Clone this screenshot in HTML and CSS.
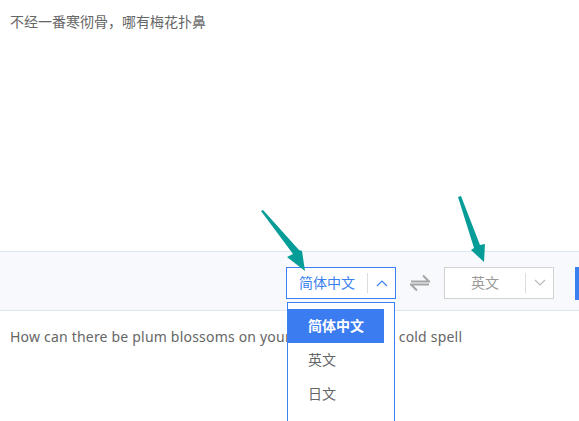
FILE: index.html
```html
<!DOCTYPE html>
<html lang="zh-CN">
<head>
    <meta charset="UTF-8">
    <title>翻译</title>
    <link rel="stylesheet" href="styles.css">
</head>
<body>

    <div class="page">
        <!-- source text -->
        <div class="source">不经一番寒彻骨，哪有梅花扑鼻</div>

        <div class="toolbar">
            <div class="select active">
                <span class="select-label">简体中文</span>
                <span class="select-arrow">
                    <svg width="12" height="8" viewBox="0 0 12 8"><path d="M1 7 L6 2 L11 7" fill="none" stroke="#3a80f0" stroke-width="1.2"/></svg>
                </span>
                <ul class="dropdown">
                    <li class="selected">简体中文</li>
                    <li>英文</li>
                    <li>日文</li>
                </ul>
            </div>

            <span class="swap">
                <svg width="20" height="18" viewBox="0 0 20 18"><path d="M1 7.5 H19 L13 1.5 M19 10.5 H1 L7 16.5" fill="none" stroke="#a5a5a5" stroke-width="2"/></svg>
            </span>

            <div class="select">
                <span class="select-label">英文</span>
                <span class="select-arrow">
                    <svg width="12" height="8" viewBox="0 0 12 8"><path d="M1 1 L6 6 L11 1" fill="none" stroke="#b8b8b8" stroke-width="1.2"/></svg>
                </span>
            </div>

            <button class="translate-btn" title="翻译"></button>
        </div>

        <!-- result -->
        <div class="result">How can there be plum blossoms on your nose without a cold spell</div>
    </div>

    <!-- annotation arrows -->
    <svg class="marks" width="579" height="421" viewBox="0 0 579 421">
        <polygon points="261,211 263,210 299,250 302,251 305,271 287,257 293,254" fill="#069c98"/>
        <polygon points="458,197 461,196 480,245 485,244 484,262 471,250 474,248" fill="#069c98"/>
    </svg>

</body>
</html>
```

FILE: styles.css
```css
:root {
    --blue: #3a80f0;
    --text: #666;
    --grey-border: #d2d2d2;
}

body {
    margin: 0;
    width: 579px;
    height: 421px;
    overflow: hidden;
    position: relative;
    font-family: "Noto Sans", "Noto Sans CJK SC", sans-serif;
    font-size: 14px;
    color: var(--text);
    background: #fff;
}

.page {
    display: flex;
    flex-direction: column;
}

.source {
    height: 239px;
    padding: 12px 10px 0;
    line-height: 20px;
}

.toolbar {
    height: 43px;
    border-top: 1px solid #dde7f4;
    border-bottom: 1px solid #dde7f4;
    background: #f7f9fc;
    display: flex;
    align-items: flex-start;
    padding: 15px 0 0 286px;
    overflow: visible;
}

.toolbar > * {
    flex-shrink: 0;
}

.select {
    position: relative;
    width: 110px;
    height: 32px;
    box-sizing: border-box;
    border: 1px solid var(--grey-border);
    background: #fff;
    display: flex;
    align-items: center;
    color: #9a9a9a;
}

.select.active {
    border-color: var(--blue);
    color: var(--blue);
}

.select-label {
    flex: 1;
    text-align: center;
    line-height: 20px;
    border-right: 1px solid #ddd;
}

.select-arrow {
    width: 27px;
    display: flex;
    justify-content: center;
    align-items: center;
}

.swap {
    width: 48px;
    display: flex;
    justify-content: center;
    padding-top: 7px;
}

.translate-btn {
    margin-left: 21px;
    width: 4px;
    height: 33px;
    padding: 0;
    border: none;
    background: var(--blue);
}

.dropdown {
    position: absolute;
    top: 34px;
    left: 0;
    width: 108px;
    height: 140px;
    margin: 0;
    padding: 6px 10px 0 0;
    box-sizing: border-box;
    list-style: none;
    background: #fff;
    border: 1px solid var(--blue);
    color: var(--text);
    z-index: 2;
}

.dropdown li {
    height: 34px;
    line-height: 34px;
    padding-left: 20px;
}

.dropdown li.selected {
    background: #3b7cf0;
    color: #fff;
    font-weight: bold;
}

.result {
    padding: 16px 10px 0;
    line-height: 20px;
    letter-spacing: 0.2px;
    white-space: nowrap;
}

.marks {
    position: absolute;
    top: 0;
    left: 0;
    pointer-events: none;
    z-index: 5;
}
```
